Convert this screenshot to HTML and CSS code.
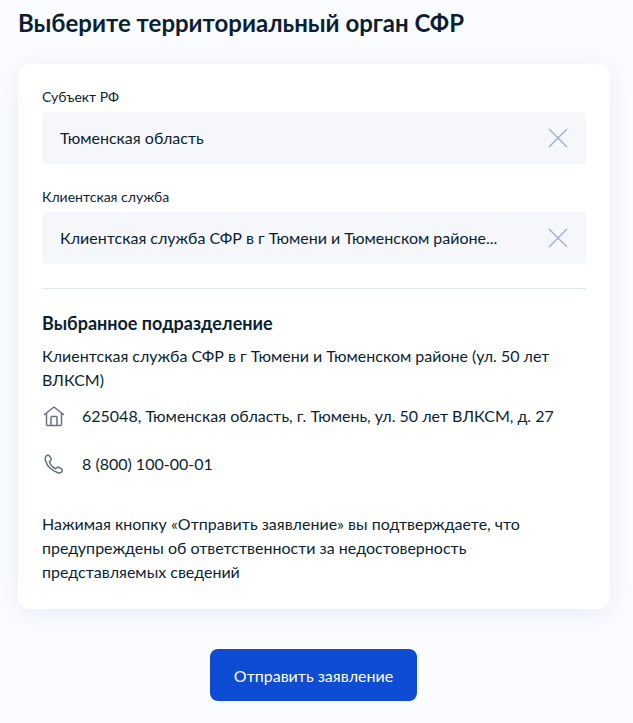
FILE: index.html
```html
<!DOCTYPE html>
<html lang="ru">
<head>
    <meta charset="UTF-8">
    <title>Выберите территориальный орган СФР</title>
    <link rel="stylesheet" href="styles.css">
</head>
<body>
    <h1 class="title">Выберите территориальный орган СФР</h1>
    <div class="card">
        <div class="field">
            <div class="label">Субъект РФ</div>
            <div class="select">
                <span class="value">Тюменская область</span>
                <svg class="clear" width="20" height="20" viewBox="0 0 20 20"><path d="M1 1L19 19M19 1L1 19"/></svg>
            </div>
        </div>
        <div class="field">
            <div class="label">Клиентская служба</div>
            <div class="select">
                <span class="value">Клиентская служба СФР в г Тюмени и Тюменском районе...</span>
                <svg class="clear" width="20" height="20" viewBox="0 0 20 20"><path d="M1 1L19 19M19 1L1 19"/></svg>
            </div>
        </div>
        <div class="divider"></div>
        <h2 class="subtitle">Выбранное подразделение</h2>
        <p class="text">Клиентская служба СФР в г Тюмени и Тюменском районе (ул. 50 лет ВЛКСМ)</p>
        <div class="contact address">
            <svg class="icon" width="24" height="24" viewBox="0 0 24 24"><path d="M2.500 10.500L12 3l9.500 7.500M4.500 9.500V20.500a1 1 0 0 0 1 1h13a1 1 0 0 0 1-1V9.500M9 21.500V13.500a1 1 0 0 1 1-1h4a1 1 0 0 1 1 1v8"/></svg>
            <span>625048, Тюменская область, г. Тюмень, ул. 50 лет ВЛКСМ, д. 27</span>
        </div>
        <div class="contact phone">
            <svg class="icon" width="24" height="24" viewBox="0 0 24 24"><path d="M4 4.200c1-1 2.600-1.300 3.400-.3l1.600 2.400c.5.8.3 1.600-.3 2.200L7.400 9.800c.8 2.600 3.600 5.800 6.200 7l1.300-1.100c.7-.6 1.600-.7 2.300-.2l2.600 1.700c.9.700.6 2.100-.3 2.900-.9.800-2.200 1.100-3.500.7C9.500 19 4.600 13.500 3.300 8c-.3-1.400 0-2.800.7-3.800z"/></svg>
            <span>8 (800) 100-00-01</span>
        </div>
        <p class="text notice">Нажимая кнопку «Отправить заявление» вы подтверждаете, что предупреждены об ответственности за недостоверность представляемых сведений</p>
    </div>
    <div class="actions">
        <button class="button">Отправить заявление</button>
    </div>
</body>
</html>
```

FILE: styles.css
```css
* {
    margin: 0;
    padding: 0;
    box-sizing: border-box;
}
html {
    height: 100%;
}
body {
    min-height: 100%;
    padding: 7px 23px 0 18px;
    background-color: #fbfcff;
    font-family: "Lato", "Noto Sans", sans-serif;
    color: #0b1f33;
    overflow: hidden;
}
.title {
    font-size: 24px;
    line-height: 32px;
    font-weight: 700;
    margin-bottom: 25px;
}
.card {
    background-color: #fff;
    border-radius: 12px;
    padding: 23px 24px 25px;
    box-shadow: 0 4px 24px rgba(176, 190, 230, 0.25);
}
.field {
    margin-bottom: 23px;
}
.label {
    font-size: 14px;
    line-height: 20px;
    margin-bottom: 5px;
    color: #0b1f33;
}
.select {
    display: flex;
    align-items: center;
    height: 52px;
    padding: 0 18px;
    background-color: #f5f7fa;
    border-radius: 4px;
}
.value {
    flex: 1;
    min-width: 0;
    padding-right: 40px;
    font-size: 16px;
    line-height: 24px;
    white-space: nowrap;
}
.clear {
    flex: none;
    fill: none;
    stroke: #a4b1d4;
    stroke-width: 1.5;
}
.divider {
    height: 1px;
    background-color: #e1e7ee;
    margin: 24px 0 22px;
}
.subtitle {
    font-size: 18px;
    line-height: 24px;
    font-weight: 700;
    margin-bottom: 9px;
}
.text {
    font-size: 16px;
    line-height: 24px;
}
.contact {
    display: flex;
    align-items: center;
    gap: 16px;
    font-size: 16px;
    line-height: 24px;
    margin-top: 12px;
}
.phone {
    margin-top: 24px;
}
.icon {
    flex: none;
    fill: none;
    stroke: #66727f;
    stroke-width: 1.5;
    stroke-linejoin: round;
    stroke-linecap: round;
}
.notice {
    margin-top: 36px;
}
.actions {
    display: flex;
    justify-content: center;
    margin-top: 40px;
    padding-right: 1px;
}
.button {
    width: 207px;
    height: 52px;
    border: none;
    border-radius: 8px;
    background-color: #0d4cd3;
    color: #fff;
    font-family: inherit;
    font-size: 16px;
    cursor: pointer;
}
```
